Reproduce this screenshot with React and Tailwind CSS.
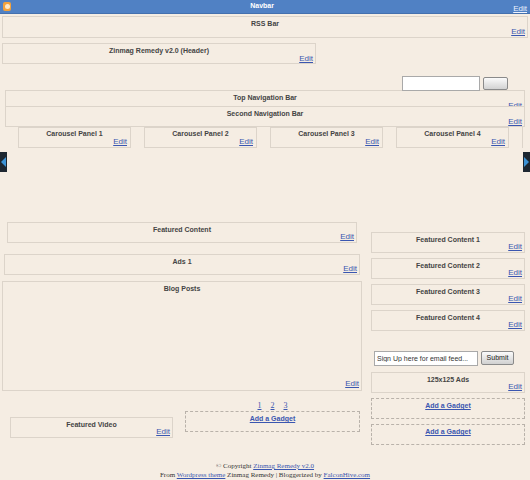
import React from "react";

const font = { fontFamily: '"Liberation Sans", Arial, sans-serif' };
const serif = { fontFamily: '"Liberation Serif", "Times New Roman", serif' };

function EditLink() {
  return (
    <a href="#" className="text-[8px] leading-[9px] text-[#3a56b0] underline">
      Edit
    </a>
  );
}

// standard blogger layout widget box
function Widget({ title, className = "" }) {
  return (
    <div className={`h-[21px] border border-[#dcd4ca] flex flex-col pt-[2px] ${className}`}>
      <div className="text-center text-[7px] leading-[10px] font-bold text-[#444]">{title}</div>
      <div className="text-right pr-[2px] text-[8px] leading-[9px] -mt-[3px]">
        <EditLink />
      </div>
    </div>
  );
}

function Gadget({ className = "" }) {
  return (
    <div className={`h-[21px] border border-dashed border-[#b9b2aa] flex justify-center pt-[2px] ${className}`}>
      <a href="#" className="text-[7px] leading-[10px] font-bold text-[#3a56b0] underline">
        Add a Gadget
      </a>
    </div>
  );
}

function Arrow({ dir }) {
  return (
    <div className="w-[7px] h-[20px] bg-[#1d2731] flex items-center justify-center">
      <svg width="5" height="10" viewBox="0 0 5 10">
        {dir === "left" ? (
          <polygon points="5,0 0,5 5,10" fill="#3d93d6" />
        ) : (
          <polygon points="0,0 5,5 0,10" fill="#3d93d6" />
        )}
      </svg>
    </div>
  );
}

export default function App() {
  return (
    <div className="w-[530px] h-[480px] bg-[#f5ede3] overflow-hidden" style={font}>
      {/* NAVBAR */}
      <div className="h-[14px] bg-[#5081c4] border-b border-[#4470ae] flex items-center">
        <div className="ml-[3px] w-[8px] h-[9px] rounded-[2px] bg-[#f3a23c] flex items-center justify-center">
          <div className="w-[5px] h-[5px] rounded-full bg-[#fde9c8]" />
        </div>
        <div className="flex-1 text-center text-[7px] font-bold text-white">Navbar</div>
        <a href="#" className="mr-[3px] text-[8px] leading-[9px] mt-[4px] text-[#eef3ff] underline">
          Edit
        </a>
      </div>

      <div className="px-[2px]">
        {/* RSS */}
        <div className="mt-[2px] h-[22px] border border-[#dcd4ca] flex flex-col pt-[2px]">
          <div className="text-center text-[7px] leading-[10px] font-bold text-[#444]">RSS Bar</div>
          <div className="text-right pr-[2px] text-[8px] leading-[9px] -mt-[2px]">
            <EditLink />
          </div>
        </div>

        {/* HEADER */}
        <div className="mt-[5px] w-[314px] h-[21px] border border-[#dcd4ca] flex flex-col pt-[2px]">
          <div className="text-center text-[7px] leading-[10px] font-bold text-[#444]">
            Zinmag Remedy v2.0 (Header)
          </div>
          <div className="text-right pr-[2px] text-[8px] leading-[9px] -mt-[2px]">
            <EditLink />
          </div>
        </div>

        {/* SEARCH */}
        <div className="mt-[12px] h-[14px] flex items-start justify-end pr-[20px]">
          <input
            readOnly
            className="w-[78px] h-[15px] bg-white border border-[#a9a9a9] outline-none"
          />
          <button className="ml-[3px] mt-[1px] w-[25px] h-[13px] rounded-[2px] border border-[#8a8a8a] bg-gradient-to-b from-[#fbfbfb] to-[#d2d2d2]" />
        </div>

        {/* NAV BARS */}
        <div className="mx-[3px]">
          <div className="h-[17px] border border-[#dcd4ca] flex flex-col pt-[2px] overflow-hidden">
            <div className="text-center text-[7px] leading-[10px] font-bold text-[#444]">Top Navigation Bar</div>
            <div className="text-right pr-[2px] text-[8px] leading-[9px] -mt-[2px]">
              <EditLink />
            </div>
          </div>
          <div className="h-[20px] border border-t-0 border-[#dcd4ca] flex flex-col pt-[2px]">
            <div className="text-center text-[7px] leading-[10px] font-bold text-[#444]">Second Navigation Bar</div>
            <div className="text-right pr-[2px] text-[8px] leading-[9px] -mt-[2px]">
              <EditLink />
            </div>
          </div>
        </div>

        {/* CAROUSEL */}
        <div className="flex items-start pl-[16px] gap-[13px]">
          {[1, 2, 3, 4].map((n) => (
            <div key={n} className="w-[113px] h-[21px] border border-[#dcd4ca] flex flex-col pt-[1px]">
              <div className="text-center text-[7px] leading-[10px] font-bold text-[#444]">Carousel Panel {n}</div>
              <div className="text-right pr-[3px] text-[8px] leading-[9px] -mt-[2px]">
                <EditLink />
              </div>
            </div>
          ))}
          <div className="w-px h-[21px] bg-[#dcd4ca]" />
        </div>
        <div className="-mx-[2px] mt-[4px] flex justify-between">
          <Arrow dir="left" />
          <Arrow dir="right" />
        </div>

        {/* MAIN */}
        <div className="mt-[50px] flex items-start">
          <div className="w-[360px]">
            <Widget title="Featured Content" className="mx-[5px]" />
            <Widget title="Ads 1" className="mx-[2px] mt-[11px]" />
            <div className="mt-[6px] h-[110px] border border-[#dcd4ca] flex flex-col justify-between pt-[2px] pb-[2px]">
              <div className="text-center text-[7px] leading-[10px] font-bold text-[#444]">Blog Posts</div>
              <div className="text-right pr-[2px] text-[8px] leading-[9px]">
                <EditLink />
              </div>
            </div>
            <div className="mt-[9px] flex items-start">
              <Widget title="Featured Video" className="ml-[8px] mt-[17px] w-[163px]" />
              <div className="ml-[12px] w-[175px]">
                <div className="h-[11px] flex justify-center gap-[9px] text-[8px] leading-[11px]" style={serif}>
                  {[1, 2, 3].map((n) => (
                    <a key={n} href="#" className="text-[#3a56b0] underline">
                      {n}
                    </a>
                  ))}
                </div>
                <Gadget />
              </div>
            </div>
          </div>

          <div className="ml-[9px] w-[154px] mt-[10px]">
            <Widget title="Featured Content 1" />
            <Widget title="Featured Content 2" className="mt-[5px]" />
            <Widget title="Featured Content 3" className="mt-[5px]" />
            <Widget title="Featured Content 4" className="mt-[5px]" />
            <div className="mt-[20px] flex items-start">
              <input
                readOnly
                value="Sign Up here for email feed..."
                className="ml-[3px] w-[104px] h-[15px] px-[2px] bg-white border border-[#a9a9a9] text-[7px] text-[#333] outline-none"
              />
              <button className="ml-[3px] w-[33px] h-[14px] rounded-[2px] border border-[#8a8a8a] bg-gradient-to-b from-[#fbfbfb] to-[#d0d0d0] text-[7px] text-[#222] leading-[12px]">
                Submit
              </button>
            </div>
            <Widget title="125x125 Ads" className="mt-[6px]" />
            <Gadget className="mt-[5px]" />
            <Gadget className="mt-[5px]" />
          </div>
        </div>

        {/* FOOTER */}
        <div className="mt-[17px] text-center text-[7px] leading-[9px] text-[#333]" style={serif}>
          <div>
            © Copyright{" "}
            <a href="#" className="text-[#3a56b0] underline">
              Zinmag Remedy v2.0
            </a>
          </div>
          <div>
            From{" "}
            <a href="#" className="text-[#3a56b0] underline">
              Wordpress theme
            </a>{" "}
            Zinmag Remedy | Bloggerized by{" "}
            <a href="#" className="text-[#3a56b0] underline">
              FalconHive.com
            </a>
          </div>
        </div>
      </div>
    </div>
  );
}
